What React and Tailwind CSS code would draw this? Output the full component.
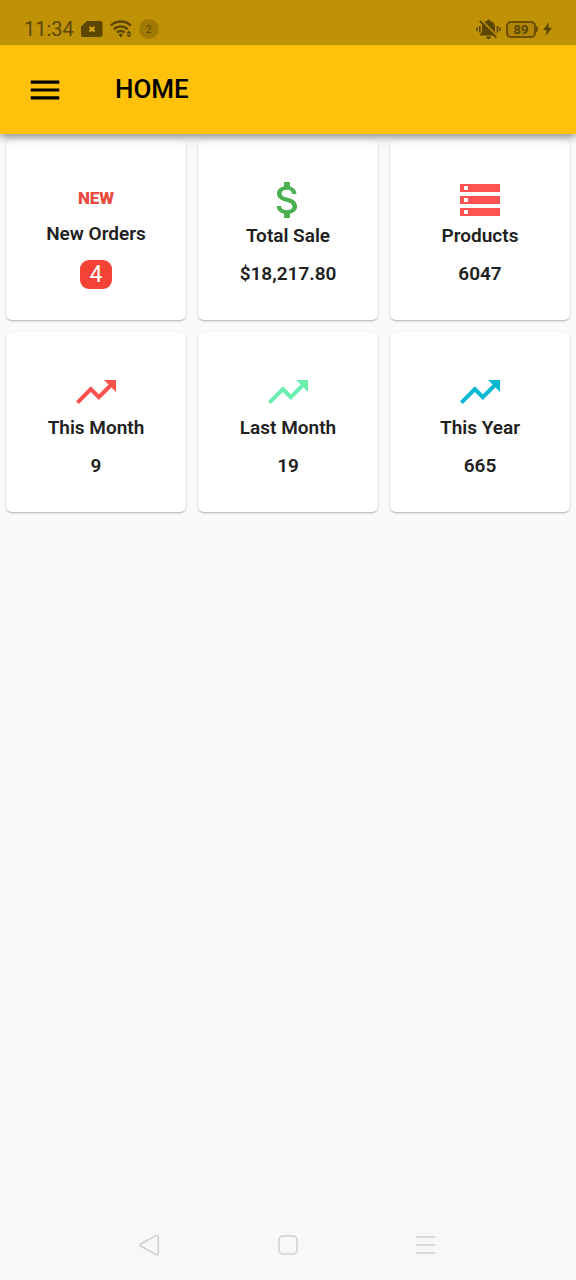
import React from 'react';
import {
  MdAttachMoney,
  MdMenu,
  MdStorage,
  MdTrendingUp,
} from 'react-icons/md';

// Data for the dashboard cards
const cards = [
  {
    title: 'New Orders',
    value: '4',
    badge: true,
    icon: (
      <span className="flex h-12 items-center text-[17px] font-black text-[#ea4b40]">
        NEW
      </span>
    ),
  },
  {
    title: 'Total Sale',
    value: '$18,217.80',
    icon: <MdAttachMoney className="size-12 text-[#4caf50]" />,
  },
  {
    title: 'Products',
    value: '6047',
    icon: <MdStorage className="size-12 text-[#ff5252]" />,
  },
  {
    title: 'This Month',
    value: '9',
    icon: <MdTrendingUp className="size-12 text-[#f9524f]" />,
  },
  {
    title: 'Last Month',
    value: '19',
    icon: <MdTrendingUp className="size-12 text-[#69f0ae]" />,
  },
  {
    title: 'This Year',
    value: '665',
    icon: <MdTrendingUp className="size-12 text-[#0bb8d2]" />,
  },
];

const StatusBar = () => {
  return (
    <div className="flex h-[45px] items-end justify-between bg-[#bf9205] px-6 pb-1 text-[#5d4600]">
      <div className="flex h-6 items-center gap-[7px]">
        <span className="text-xl leading-6">11:34</span>
        {/* SIM card */}
        <svg className="h-4 w-[22px]" viewBox="0 0 22 16">
          <path
            d="M6 0h13.500a2 2 0 0 1 2 2v12a2 2 0 0 1-2 2H2a2 2 0 0 1-2-2V5.500z"
            fill="#5d4600"
          />
          <path d="M8.500 6l5 4.500M13.500 6l-5 4.500" stroke="#d9a90f" strokeWidth="2" />
        </svg>
        {/* Wifi */}
        <svg className="h-[18px] w-[22px]" viewBox="0 0 23 18" fill="none">
          <g stroke="#5d4600" strokeWidth="2.600">
            <path d="M.8 5.500a15 15 0 0 1 21 0" />
            <path d="M4.100 9.300a10.300 10.300 0 0 1 14.400 0" />
            <path d="M7.300 12.800a5.600 5.600 0 0 1 8 0" />
          </g>
          <path d="M8.800 15a3.600 3.600 0 0 1 5 0l-2.500 2.800z" fill="#5d4600" />
          <path d="M19.700 10.500l2.800 3.200h-5.600zM19.700 18l2.800-3.200h-5.600z" fill="#5d4600" />
        </svg>
        <span className="flex size-5 items-center justify-center rounded-full bg-[#a07903] text-[10px]">
          2
        </span>
      </div>

      <div className="flex h-6 items-center gap-[5px]">
        {/* Muted bell */}
        <svg className="h-5 w-[25px]" viewBox="0 0 25 20">
          <path
            d="M12.500.5A1.700 1.700 0 0 1 14.200 2 6.300 6.300 0 0 1 19 8v5l2 2.200v1.300H4v-1.300L6 13V8a6.300 6.300 0 0 1 4.800-6A1.700 1.700 0 0 1 12.500.5zM10 17.500h5a2.500 2.500 0 0 1-5 0z"
            fill="#5d4600"
          />
          <path d="M5 1l16.500 16.500" stroke="#bf9205" strokeWidth="2" />
          <path d="M3.800 2l16.500 16.500" stroke="#5d4600" strokeWidth="1.800" />
          <path
            d="M1 8.500v3.500M3.800 7v6.500M21.500 7v6.500M24 8.500v3.500"
            stroke="#5d4600"
            strokeWidth="1.600"
          />
        </svg>
        {/* Battery */}
        <div className="flex items-center">
          <span className="flex h-[17px] w-[30px] items-center justify-center rounded-[5px] border-2 border-[#6b4e00] bg-[#b08604] text-[13px] leading-none font-bold">
            89
          </span>
          <span className="h-1.5 w-0.5 rounded-r bg-[#6b4e00]"></span>
        </div>
        <svg className="h-[14px] w-[9px]" viewBox="0 0 9 14">
          <path d="M6 0L0 8h3.500L2.700 14 9 5.800H5.300z" fill="#5d4600" />
        </svg>
      </div>
    </div>
  );
};

const Card = ({ title, value, icon, badge }) => {
  return (
    <div className="flex aspect-square flex-col items-center justify-center rounded-md bg-white pt-0.5 text-[19px] leading-6 font-semibold text-[#212121] shadow-[0_1px_2px_rgba(0,0,0,0.3)]">
      {icon}
      <h2 className="mb-3.5">{title}</h2>
      {badge ? (
        <span className="flex h-[29px] w-8 items-center justify-center rounded-[9px] bg-[#f44336] pt-0.5 text-[23px] font-normal text-white">
          {value}
        </span>
      ) : (
        <p>{value}</p>
      )}
    </div>
  );
};

const App = () => {
  return (
    <div className="flex min-h-screen flex-col bg-[#fafafa] font-[Roboto,sans-serif]">
      <header className="z-10 shadow-[0_3px_8px_rgba(0,0,0,0.45)]">
        <StatusBar />
        <div className="flex h-[89px] items-center gap-[51px] bg-[#ffc10a] px-[26px]">
          <button type="button" aria-label="Open menu">
            <MdMenu className="size-[38px] text-black" />
          </button>
          <h1 className="text-[26px] font-medium text-black">HOME</h1>
        </div>
      </header>

      <main className="grid flex-1 grid-cols-3 content-start gap-3 p-1.5">
        {cards.map((card) => (
          <Card key={card.title} {...card} />
        ))}
      </main>

      {/* Android navigation */}
      <nav className="flex h-16 items-center justify-center gap-[114px] bg-[#f8f8f8] pb-1.5 text-[#cfcfcf]">
        <button type="button" aria-label="Back">
          <svg className="size-6" viewBox="0 0 24 24" fill="none" stroke="currentColor" strokeWidth="1.500">
            <path d="M18.500 2.300L2.500 11a1.200 1.200 0 0 0 0 2l16 8.700a1.300 1.300 0 0 0 1.800-1.200v-17a1.300 1.300 0 0 0-1.800-1.200z" />
          </svg>
        </button>
        <button type="button" aria-label="Home">
          <svg className="size-6" viewBox="0 0 24 24" fill="none" stroke="currentColor" strokeWidth="1.500">
            <rect x="3" y="3" width="18" height="18" rx="4" />
          </svg>
        </button>
        <button type="button" aria-label="Recent apps">
          <svg className="size-6" viewBox="0 0 24 24" fill="none" stroke="currentColor" strokeWidth="1.500">
            <path d="M2 4h19M2 12h19M2 20h19" />
          </svg>
        </button>
      </nav>
    </div>
  );
};

export default App;
